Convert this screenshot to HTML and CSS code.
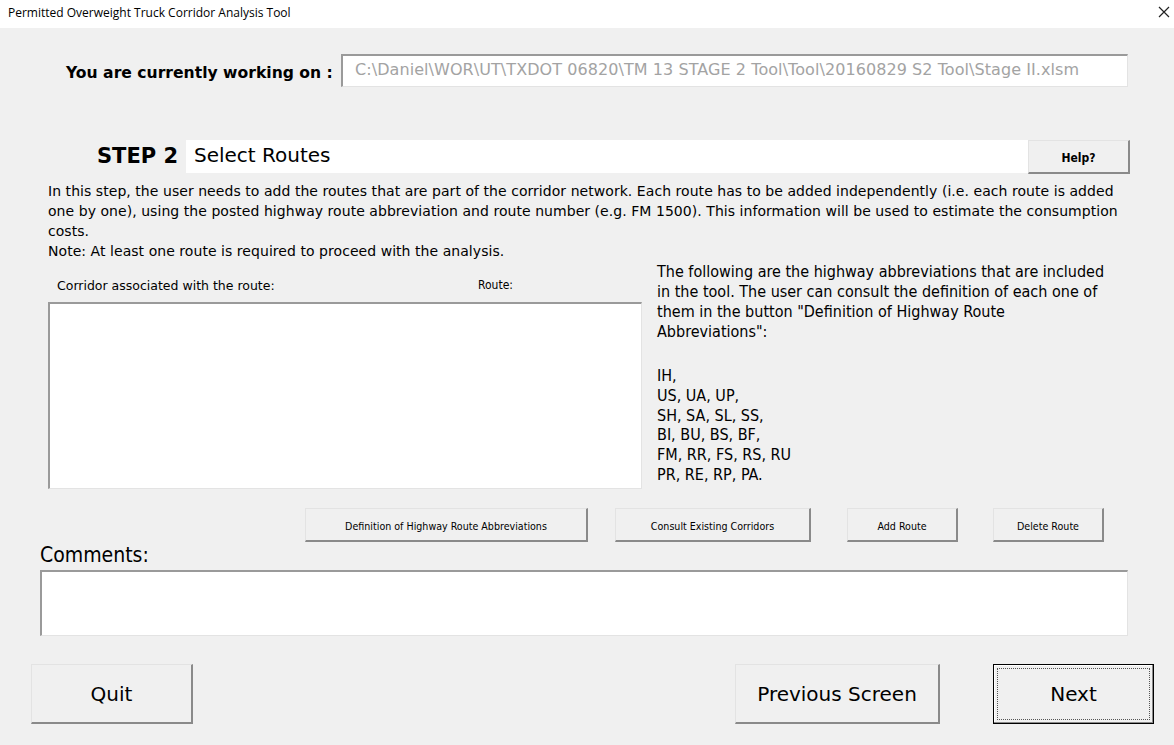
FILE: index.html
```html
<!DOCTYPE html>
<html lang="en">
<head>
<meta charset="utf-8">
<title>Permitted Overweight Truck Corridor Analysis Tool</title>
<link rel="stylesheet" href="styles.css">
</head>
<body>
<div class="titlebar">
  <span class="title">Permitted Overweight Truck Corridor Analysis Tool</span>
  <svg class="close" width="12" height="12" viewBox="0 0 12 12"><path d="M1 1 L11 11 M11 1 L1 11" stroke="#222" stroke-width="1.2" fill="none"/></svg>
</div>

<div class="form">
  <div class="working">
    <span class="working-label">You are currently working on :</span>
    <div class="textbox path">C:\Daniel\WOR\UT\TXDOT 06820\TM 13 STAGE 2 Tool\Tool\20160829 S2 Tool\Stage II.xlsm</div>
  </div>

  <div class="step">
    <span class="step-num">STEP 2</span>
    <div class="step-title">Select Routes</div>
    <button class="btn help">Help?</button>
  </div>

  <p class="intro">In this step, the user needs to add the routes that are part of the corridor network. Each route has to be added independently (i.e. each route is added<br>one by one), using the posted highway route abbreviation and route number (e.g. FM 1500). This information will be used to estimate the consumption<br>costs.<br>Note: At least one route is required to proceed with the analysis.</p>

  <div class="routes">
    <div class="route-list">
      <div class="list-head">
        <span class="col-corridor">Corridor associated with the route:</span>
        <span class="col-route">Route:</span>
      </div>
      <div class="listbox"></div>
    </div>
    <div class="abbrev">
      <p>The following are the highway abbreviations that are included<br>in the tool. The user can consult the definition of each one of<br>them in the button "Definition of Highway Route<br>Abbreviations":</p>
      <p class="codes">IH,<br>US, UA, UP,<br>SH, SA, SL, SS,<br>BI, BU, BS, BF,<br>FM, RR, FS, RS, RU<br>PR, RE, RP, PA.</p>
    </div>
  </div>

  <div class="actions">
    <button class="btn small def">Definition of Highway Route Abbreviations</button>
    <button class="btn small consult">Consult Existing Corridors</button>
    <button class="btn small add">Add Route</button>
    <button class="btn small del">Delete Route</button>
  </div>

  <div class="comments-label">Comments:</div>
  <div class="textbox comments"></div>

  <div class="nav">
    <button class="btn big quit">Quit</button>
    <div class="nav-right">
      <button class="btn big prev">Previous Screen</button>
      <button class="btn big next"><span class="focus">Next</span></button>
    </div>
  </div>
</div>
</body>
</html>
```

FILE: styles.css
```css
* { box-sizing: border-box; }

html, body {
  margin: 0;
  padding: 0;
}

body {
  width: 1174px;
  height: 745px;
  overflow: hidden;
  background: #f0f0f0;
  font-family: "DejaVu Sans", sans-serif;
  color: #000;
}

/* window caption */
.titlebar {
  height: 28px;
  background: #fff;
  display: flex;
  align-items: center;
  justify-content: space-between;
  padding: 0 4px 4px 8px;
}
.title {
  font-family: "Open Sans", sans-serif;
  font-size: 12px;
  color: #000;
}

.form {
  padding: 26px 0 0 0;
}

/* sunken edit controls */
.textbox {
  background: #fff;
  border-style: solid;
  border-width: 2px 1px 1px 2px;
  border-color: #9a9a9a #e3e3e3 #e3e3e3 #9a9a9a;
}

.working {
  display: flex;
  align-items: center;
  padding-left: 66px;
  height: 33px;
}
.working-label {
  font-weight: bold;
  font-size: 15.6px;
  width: 275px;
  padding-top: 5px;
}
.path {
  width: 787px;
  height: 33px;
  padding: 4px 0 0 12px;
  font-size: 16px;
  letter-spacing: 0.07px;
  color: #a3a3a3;
  white-space: nowrap;
}

.step {
  display: flex;
  align-items: center;
  margin-top: 53px;
  margin-left: 97px;
  width: 1033px;
  height: 34px;
}
.step-num {
  font-weight: bold;
  font-size: 21px;
  width: 89px;
  margin-top: -2px;
}
.step-title {
  flex: 1;
  background: #fff;
  height: 33px;
  align-self: flex-start;
  font-size: 20px;
  padding: 3px 0 0 8px;
}

/* raised command buttons */
.btn {
  font-family: "DejaVu Sans Condensed", "DejaVu Sans", sans-serif;
  background: #f0f0f0;
  color: #000;
  border-style: solid;
  border-width: 1px 2px 2px 1px;
  border-color: #e3e3e3 #8a8a8a #8a8a8a #e3e3e3;
  padding: 0;
  margin: 0;
}
.help {
  width: 102px;
  height: 34px;
  font-weight: bold;
  font-size: 12px;
  padding-top: 2px;
}

.intro {
  margin: 7px 0 0 48px;
  font-size: 14px;
  letter-spacing: 0.05px;
  line-height: 20px;
  white-space: nowrap;
}

.routes {
  display: flex;
  margin-left: 48px;
}
.route-list {
  width: 594px;
  padding-top: 17px;
}
.list-head {
  display: flex;
  font-size: 12.5px;
  height: 24px;
  padding-left: 9px;
}
.col-corridor { width: 421px; }
.col-route { font-family: "DejaVu Sans Condensed", "DejaVu Sans", sans-serif; font-size: 12px; }
.listbox {
  height: 187px;
  background: #fff;
  border-style: solid;
  border-width: 2px 1px 1px 2px;
  border-color: #9a9a9a #e3e3e3 #e3e3e3 #9a9a9a;
}
.abbrev {
  margin-left: 15px;
  font-family: "DejaVu Sans Condensed", "DejaVu Sans", sans-serif;
  font-size: 16px;
  line-height: 20px;
  white-space: nowrap;
}
.abbrev p { margin: 0; }
.abbrev p:first-child { margin-top: 1px; }
.codes { margin-top: 24px !important; line-height: 19.8px; }

.actions {
  display: flex;
  margin: 19px 0 0 305px;
  height: 34px;
}
.small {
  height: 34px;
  font-size: 10.6px;
  padding-top: 2px;
}
.def { width: 283px; }
.consult { width: 196px; margin-left: 27px; }
.add { width: 111px; margin-left: 36px; }
.del { width: 111px; margin-left: 35px; }

.comments-label {
  margin: 2px 0 0 40px;
  font-size: 21px;
  height: 26px;
  line-height: 22px;
  font-family: "DejaVu Sans Condensed", "DejaVu Sans", sans-serif;
}
.comments {
  margin-left: 40px;
  width: 1088px;
  height: 66px;
}

.nav {
  display: flex;
  justify-content: space-between;
  margin: 28px 20px 0 31px;
}
.nav-right { display: flex; }
.big {
  height: 60px;
  font-family: "DejaVu Sans", sans-serif;
  font-size: 20px;
}
.quit { width: 162px; }
.prev { width: 205px; }
.next {
  width: 161px;
  margin-left: 53px;
  border: 1px solid #000;
  box-shadow: inset -1px -1px 0 #8a8a8a, inset 1px 1px 0 #fff;
  padding: 3px;
}
.focus {
  display: flex;
  align-items: center;
  justify-content: center;
  width: 100%;
  height: 100%;
  border: 1px dotted #555;
}
```
